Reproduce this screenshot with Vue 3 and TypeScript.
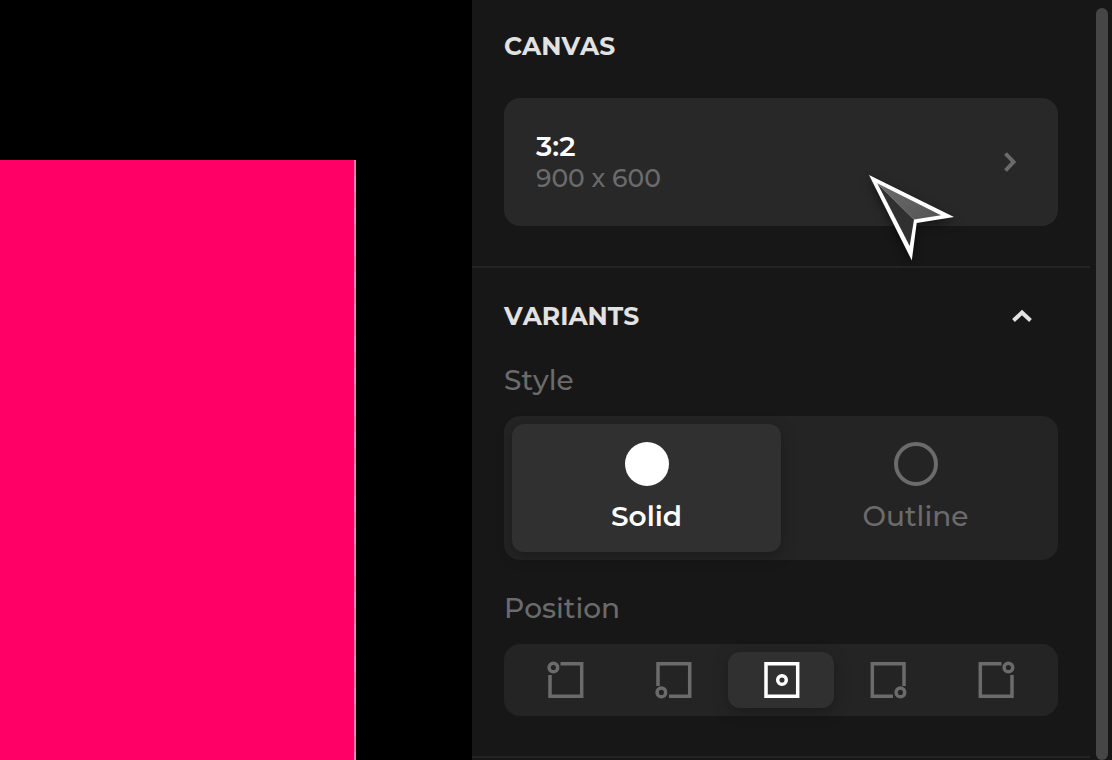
<script setup lang="ts">
import { ref } from 'vue'

interface PositionOption {
  id: string
  label: string
  frame: string
  cx: number
  cy: number
}

const shape = ref<string>('solid')
const position = ref<string>('center')
const variantsOpen = ref<boolean>(true)

const positions: PositionOption[] = [
  { id: 'top-left', label: 'Top left', frame: 'M15.5 3.7H36.7V36.3H5V15', cx: 8.4, cy: 7.5 },
  { id: 'bottom-left', label: 'Bottom left', frame: 'M5 26V3.7H36.7V36.3H16', cx: 8.4, cy: 32.4 },
  { id: 'center', label: 'Center', frame: 'M5 3.7H36.7V36.3H5Z', cx: 21, cy: 20 },
  { id: 'bottom-right', label: 'Bottom right', frame: 'M24 36.3H3.3V3.7H35V26', cx: 31.4, cy: 32.4 },
  { id: 'top-right', label: 'Top right', frame: 'M24.5 3.7H3.3V36.3H35V15', cx: 31.4, cy: 7.5 },
]
</script>

<template>
  <div class="editor">
    <main class="stage">
      <div class="artboard"></div>
      <div class="edge"></div>
    </main>
    <aside class="panel">
      <div class="content">
        <section class="section first">
          <h2 class="title">CANVAS</h2>
          <button type="button" class="card">
            <span class="size">
              <span class="ratio">3:2</span>
              <span class="pixels">900 x 600</span>
            </span>
            <svg class="chevron" viewBox="0 0 24 24" aria-hidden="true">
              <path d="M7.5 3.5 15.5 12 7.5 20.5" />
            </svg>
            <svg class="pointer" viewBox="0 0 110 110" aria-hidden="true">
              <defs>
                <linearGradient id="facet" x1="0" y1="0" x2="1" y2="1">
                  <stop offset="0" stop-color="#6c6c6c" />
                  <stop offset="1" stop-color="#545454" />
                </linearGradient>
              </defs>
              <path fill="#fff" d="M9 10 94 52 56.7 58 51.8 95.5Z" />
              <path fill="#303030" d="M17.3 18.2 54 54.5 49.7 81Z" />
              <path fill="url(#facet)" d="M17.3 18.2 81 50.2 54 54.5Z" />
            </svg>
          </button>
        </section>

        <section class="section">
          <h2 class="title">
            <button type="button" class="toggle" :aria-expanded="variantsOpen" @click="variantsOpen = !variantsOpen">
              VARIANTS
              <svg class="chevron" viewBox="0 0 24 24" aria-hidden="true">
                <path d="M3.5 16.5 12 8.5 20.5 16.5" />
              </svg>
            </button>
          </h2>
          <template v-if="variantsOpen">
            <div class="field">
              <span id="style-label" class="name">Style</span>
              <div class="segments" role="radiogroup" aria-labelledby="style-label">
                <label class="segment tall" :class="{ active: shape === 'solid' }">
                  <input v-model="shape" type="radio" name="style" value="solid" />
                  <svg class="disc" viewBox="0 0 44 44" aria-hidden="true">
                    <circle cx="22" cy="22" r="22" fill="currentColor" />
                  </svg>
                  <span>Solid</span>
                </label>
                <label class="segment tall" :class="{ active: shape === 'outline' }">
                  <input v-model="shape" type="radio" name="style" value="outline" />
                  <svg class="disc" viewBox="0 0 44 44" aria-hidden="true">
                    <circle cx="22" cy="22" r="20" fill="none" stroke="currentColor" stroke-width="4" />
                  </svg>
                  <span>Outline</span>
                </label>
              </div>
            </div>
            <div class="field">
              <span id="position-label" class="name">Position</span>
              <div class="segments spaced" role="radiogroup" aria-labelledby="position-label">
                <label
                  v-for="item in positions"
                  :key="item.id"
                  class="segment"
                  :class="{ active: position === item.id }"
                >
                  <input v-model="position" type="radio" name="position" :value="item.id" :aria-label="item.label" />
                  <svg class="place" viewBox="0 0 40 40" aria-hidden="true">
                    <path :d="item.frame" />
                    <circle :cx="item.cx" :cy="item.cy" r="4.3" />
                  </svg>
                </label>
              </div>
            </div>
          </template>
        </section>
      </div>
      <div class="track"><div class="thumb"></div></div>
    </aside>
  </div>
</template>

<style>
body {
  margin: 0;
  background: #000;
}
</style>

<style scoped>
.editor {
  display: flex;
  height: 100vh;
  overflow: hidden;
  background: #000;
  color: #fff;
  font-family: Montserrat, Inter, "Open Sans", sans-serif;
  font-size: 28px;
  font-weight: 500;
  font-kerning: none;
  line-height: 32px;
}

.stage {
  display: flex;
  flex: 1;
  min-width: 0;
  padding: 160px 116px 0 0;
}

.artboard {
  flex: 1;
  background: #ff0066;
}

.edge {
  flex: none;
  width: 2px;
  background: repeating-linear-gradient(#ff70a5 0 16px, #ff80b0 16px 32px);
}

.panel {
  display: flex;
  flex: none;
  width: 640px;
  background: #171717;
}

.content {
  flex: 1;
  min-width: 0;
}

.section {
  padding: 32px 32px 40px;
  border-bottom: 2px solid #242424;
}

.first {
  padding-top: 30px;
}

.title {
  margin: 0;
  color: #e2e2e2;
  font-size: 25px;
  font-weight: 700;
}

button {
  border: 0;
  color: inherit;
  font: inherit;
  font-kerning: inherit;
  text-align: left;
}

.card {
  position: relative;
  display: flex;
  align-items: center;
  justify-content: space-between;
  width: 100%;
  margin-top: 36px;
  padding: 32px 36px 32px 32px;
  border-radius: 16px;
  background: #282828;
}

.size {
  display: grid;
}

.ratio {
  font-weight: 600;
}

.pixels {
  color: #6b6b6b;
  font-size: 25px;
}

.chevron {
  width: 24px;
  height: 24px;
  fill: none;
  stroke: #6b6b6b;
  stroke-width: 4;
}

.toggle {
  display: flex;
  align-items: center;
  justify-content: space-between;
  width: 100%;
  padding: 0 24px 0 0;
  background: none;
}

.toggle .chevron {
  stroke: #e2e2e2;
}

.pointer {
  position: absolute;
  top: 67px;
  right: 88px;
  width: 110px;
  height: 110px;
  filter: drop-shadow(0 4px 5px rgba(0, 0, 0, 0.5));
  pointer-events: none;
}

.field {
  margin-top: 32px;
}

.name {
  display: block;
  color: #6b6b6b;
}

.segments {
  display: flex;
  margin-top: 20px;
  padding: 8px;
  border-radius: 16px;
  background: #242424;
}

.spaced {
  gap: 2px;
}

.segment {
  display: flex;
  flex: 1;
  flex-direction: column;
  align-items: center;
  padding: 8px 0;
  border-radius: 12px;
  color: #6b6b6b;
}

.tall {
  gap: 14px;
  padding: 18px 0 20px;
}

.active {
  background: #303030;
  box-shadow: 0 4px 16px rgba(0, 0, 0, 0.25);
  color: #fff;
  font-weight: 600;
}

.segment input {
  position: absolute;
  width: 1px;
  height: 1px;
  margin: 0;
  opacity: 0;
}

.disc {
  width: 44px;
  height: 44px;
}

.place {
  width: 40px;
  height: 40px;
  fill: none;
  stroke: currentColor;
  stroke-width: 3.5;
}

.track {
  flex: none;
  width: 12px;
  padding: 8px 4px 0 6px;
}

.thumb {
  height: 100%;
  border-radius: 6px;
  background: #464646;
}
</style>
